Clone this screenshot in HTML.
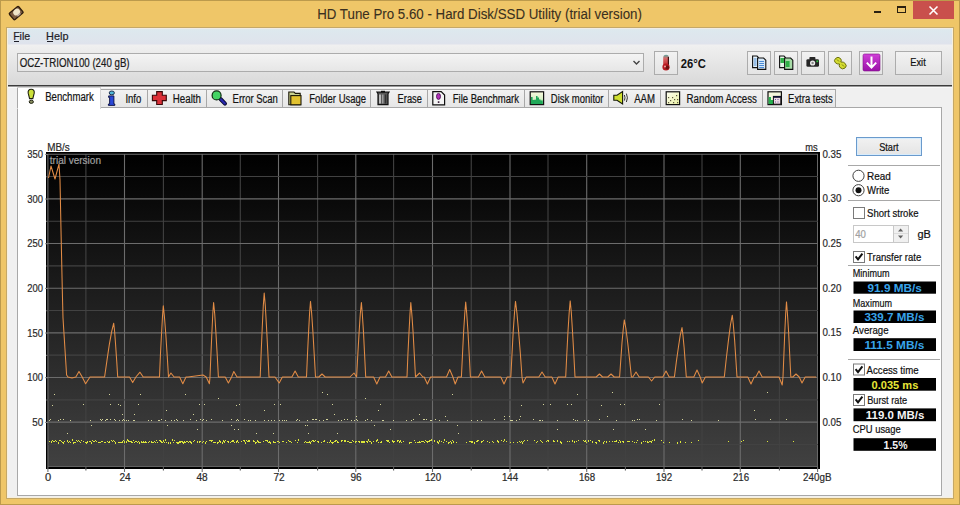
<!DOCTYPE html><html><head><meta charset="utf-8"><style>html,body{margin:0;padding:0;width:960px;height:505px;overflow:hidden;background:#efc668}svg text{font-family:"Liberation Sans",sans-serif;stroke:currentColor;stroke-width:0.22px}</style></head><body><svg width="960" height="505" viewBox="0 0 960 505" style="position:absolute;left:0;top:0;font-family:'Liberation Sans',sans-serif">
<defs>
<linearGradient id="chartbg" x1="0" y1="0" x2="0" y2="1">
 <stop offset="0" stop-color="#000"/><stop offset="1" stop-color="#414141"/>
</linearGradient>
<linearGradient id="toolbar" x1="0" y1="0" x2="0" y2="1">
 <stop offset="0" stop-color="#f0f0f0"/><stop offset="1" stop-color="#d9d9d9"/>
</linearGradient>
<linearGradient id="tab" x1="0" y1="0" x2="0" y2="1">
 <stop offset="0" stop-color="#f2f2f2"/><stop offset="1" stop-color="#e6e6e6"/>
</linearGradient>
<linearGradient id="btn" x1="0" y1="0" x2="0" y2="1">
 <stop offset="0" stop-color="#f2f2f2"/><stop offset="1" stop-color="#e4e4e4"/>
</linearGradient>
<linearGradient id="combo" x1="0" y1="0" x2="0" y2="1">
 <stop offset="0" stop-color="#f4f4f4"/><stop offset="1" stop-color="#e6e6e6"/>
</linearGradient>
</defs>
<rect x="0" y="0" width="960" height="505" fill="#efc668" />
<rect x="0.5" y="0.5" width="959" height="504" fill="none" stroke="#bc9a4c"/>
<g transform="translate(16.2,13.1) rotate(-40)"><rect x="-6" y="-4.2" width="12" height="8.4" rx="1" fill="#7a5a40" stroke="#2e1c0c" stroke-width="1.3"/><ellipse cx="1" cy="-0.5" rx="3.6" ry="3.1" fill="#efe4c8"/><rect x="-1" y="2.2" width="4" height="1.6" fill="#b8a8a0"/></g>
<text x="317.20" y="18.60" font-size="14" fill="#3a3020" color="#3a3020" textLength="324.70" lengthAdjust="spacingAndGlyphs" style="stroke-width:0.1px">HD Tune Pro 5.60 - Hard Disk/SSD Utility (trial version)</text>
<rect x="874" y="11" width="7" height="2" fill="#2a2010" />
<rect x="897.5" y="6.5" width="8" height="6" fill="none" stroke="#2a2010"/>
<rect x="897" y="6" width="9" height="2" fill="#2a2010" />
<rect x="913" y="1" width="41" height="18" fill="#c9504c" />
<path d="M929.5 6.5 L937.5 14.5 M937.5 6.5 L929.5 14.5" stroke="#fff" stroke-width="1.6"/>
<rect x="6.5" y="27.5" width="947" height="471" fill="#f8f0dc" stroke="#c4a868"/>
<rect x="8" y="29" width="944" height="468" fill="#f0f0f0" />
<defs><linearGradient id="menu" x1="0" y1="0" x2="0" y2="1"><stop offset="0" stop-color="#dde9ee"/><stop offset="1" stop-color="#dfe3ec"/></linearGradient></defs>
<rect x="8" y="28" width="944" height="1" fill="#f2ece4" />
<rect x="8" y="29" width="944" height="15" fill="url(#menu)"/>
<rect x="8" y="44" width="944" height="1" fill="#e8e9ee" />
<text x="13.15" y="40.40" font-size="11.5" fill="#1e1e28" color="#1e1e28" textLength="17.05" lengthAdjust="spacingAndGlyphs" >File</text>
<rect x="14" y="41" width="5" height="1" fill="#1e1e28" />
<text x="46.10" y="40.40" font-size="11.5" fill="#1e1e28" color="#1e1e28" textLength="22.40" lengthAdjust="spacingAndGlyphs" >Help</text>
<rect x="47" y="41" width="6" height="1" fill="#1e1e28" />
<rect x="8" y="45" width="944" height="40" fill="url(#toolbar)"/>
<rect x="8" y="85" width="944" height="1" fill="#3c3c3c" />
<rect x="8" y="86" width="944" height="1" fill="#9a9a9a" />
<rect x="8" y="87" width="944" height="1" fill="#fafafa" />
<rect x="17.5" y="53.5" width="626" height="18" fill="url(#combo)" stroke="#acacac"/>
<text x="19.65" y="66.60" font-size="12" fill="#1a1a1a" color="#1a1a1a" textLength="109.95" lengthAdjust="spacingAndGlyphs" >OCZ-TRION100 (240 gB)</text>
<path d="M633.5 61 L636.5 64 L639.5 61" fill="none" stroke="#444" stroke-width="1.4"/>
<rect x="654.5" y="51.5" width="23" height="23" fill="url(#btn)" stroke="#acacac"/>
<defs><linearGradient id="th" x1="0" y1="0" x2="0" y2="1"><stop offset="0" stop-color="#5aa8a0"/><stop offset="0.3" stop-color="#d86868"/><stop offset="1" stop-color="#c01c24"/></linearGradient></defs><rect x="663.2" y="54.8" width="5.8" height="12" rx="2.9" fill="url(#th)"/><path d="M668.4 57 V66" stroke="#401010" stroke-width="1.2"/><circle cx="666" cy="67" r="3.6" fill="#b81820"/><circle cx="667.2" cy="67.6" r="2" fill="#701010"/><circle cx="665" cy="66.6" r="1" fill="#f0a0a0"/>
<text x="680.80" y="68.00" font-size="12.5" fill="#111" color="#111" font-weight="700" style="stroke-width:0" textLength="25.10" lengthAdjust="spacingAndGlyphs" >26°C</text>
<rect x="747.5" y="51.5" width="23" height="23" fill="url(#btn)" stroke="#acacac"/>
<rect x="774.5" y="51.5" width="23" height="23" fill="url(#btn)" stroke="#acacac"/>
<rect x="801.5" y="51.5" width="23" height="23" fill="url(#btn)" stroke="#acacac"/>
<rect x="828.5" y="51.5" width="23" height="23" fill="url(#btn)" stroke="#acacac"/>
<rect x="859.5" y="51.5" width="23" height="23" fill="url(#btn)" stroke="#acacac"/>
<path d="M752.6 56 H757 L758.4 57.4 V67.6 H752.6 Z" fill="#e6f2fa" stroke="#101010" stroke-width="1.1"/>
<path d="M757.6 58 H763.6 L765.8 60.2 V69.4 H757.6 Z" fill="#d6e8f8" stroke="#101010" stroke-width="1.1"/>
<path d="M759.2 61.5 H764 M759.2 63.5 H764 M759.2 65.5 H764 M759.2 67.5 H764 M753.8 59 H756.6 M753.8 61 H756.6 M753.8 63 H756.6 M753.8 65 H756.6" stroke="#3a80d0" stroke-width="0.9"/>
<path d="M779.6 56 H784 L785.4 57.4 V67.6 H779.6 Z" fill="#e6f4e8" stroke="#101010" stroke-width="1.1"/><rect x="780.4" y="58" width="3.6" height="5" fill="#30b048"/>
<path d="M784.6 58 H790.6 L792.8 60.2 V69.4 H784.6 Z" fill="#a8dca8" stroke="#101010" stroke-width="1.1"/><path d="M785.6 61 h4 v6 h-4z" fill="#30b048"/>
<rect x="806.4" y="59.2" width="12.6" height="7.6" rx="1.4" fill="#262626"/><rect x="809.4" y="57" width="6" height="3" rx="0.8" fill="#262626"/><circle cx="812.6" cy="63" r="2.6" fill="#f0f0f0"/><circle cx="812.6" cy="63" r="1.2" fill="#888"/><rect x="816.4" y="60.4" width="1.8" height="1.8" fill="#30c040"/>
<path d="M835.5 58.5 Q838 56 840.5 58.5 Q842 60 840.8 62 Q843.5 61.5 845.2 63.5 Q847.5 66 845 68 Q842.5 70 840 67.5 Q838.5 66 839.6 64 Q837 64.5 835.2 62.5 Q833.5 60.5 835.5 58.5 Z" fill="#d4dc30" stroke="#6c7010" stroke-width="1"/>
<path d="M837 59.5 L839 61.5 M842 64.5 L844 66.5" stroke="#7a8010" stroke-width="1"/>
<defs><linearGradient id="pd" x1="0" y1="0" x2="0" y2="1"><stop offset="0" stop-color="#d040d8"/><stop offset="1" stop-color="#9a10a8"/></linearGradient></defs>
<rect x="863" y="54" width="17" height="17" rx="1.5" fill="url(#pd)" stroke="#801088" stroke-width="0.6"/><path d="M871.5 56.5 V67.2 M866.8 62.6 L871.5 67.6 L876.2 62.6" fill="none" stroke="#fff" stroke-width="2"/>
<rect x="895.5" y="51.5" width="46" height="23" fill="url(#btn)" stroke="#acacac"/>
<text x="910.30" y="66.20" font-size="11.5" fill="#111" color="#111" textLength="15.40" lengthAdjust="spacingAndGlyphs" >Exit</text>
<rect x="100.5" y="89.5" width="47" height="18" fill="url(#tab)" stroke="#a8a8a8"/>
<rect x="147.5" y="89.5" width="59" height="18" fill="url(#tab)" stroke="#a8a8a8"/>
<rect x="206.5" y="89.5" width="76" height="18" fill="url(#tab)" stroke="#a8a8a8"/>
<rect x="282.5" y="89.5" width="88" height="18" fill="url(#tab)" stroke="#a8a8a8"/>
<rect x="370.5" y="89.5" width="57" height="18" fill="url(#tab)" stroke="#a8a8a8"/>
<rect x="427.5" y="89.5" width="97" height="18" fill="url(#tab)" stroke="#a8a8a8"/>
<rect x="524.5" y="89.5" width="84" height="18" fill="url(#tab)" stroke="#a8a8a8"/>
<rect x="608.5" y="89.5" width="52" height="18" fill="url(#tab)" stroke="#a8a8a8"/>
<rect x="660.5" y="89.5" width="102" height="18" fill="url(#tab)" stroke="#a8a8a8"/>
<rect x="762.5" y="89.5" width="73" height="18" fill="url(#tab)" stroke="#a8a8a8"/>
<rect x="17.5" y="107.5" width="924" height="388" fill="#fff" stroke="#a8a8a8"/>
<rect x="17.5" y="87.5" width="83" height="21" fill="#fff" stroke="#d4d4d4"/>
<rect x="17" y="88" width="1" height="20" fill="#a8a8a8" />
<rect x="18" y="100" width="82" height="9" fill="#fff" />
<text x="45.20" y="100.90" font-size="12" fill="#141414" color="#141414" textLength="48.60" lengthAdjust="spacingAndGlyphs" >Benchmark</text>
<text x="125.40" y="102.70" font-size="12" fill="#141414" color="#141414" textLength="15.85" lengthAdjust="spacingAndGlyphs" >Info</text>
<text x="172.80" y="102.70" font-size="12" fill="#141414" color="#141414" textLength="28.20" lengthAdjust="spacingAndGlyphs" >Health</text>
<text x="232.60" y="102.70" font-size="12" fill="#141414" color="#141414" textLength="45.30" lengthAdjust="spacingAndGlyphs" >Error Scan</text>
<text x="309.20" y="102.70" font-size="12" fill="#141414" color="#141414" textLength="56.80" lengthAdjust="spacingAndGlyphs" >Folder Usage</text>
<text x="397.60" y="102.70" font-size="12" fill="#141414" color="#141414" textLength="24.30" lengthAdjust="spacingAndGlyphs" >Erase</text>
<text x="452.80" y="102.70" font-size="12" fill="#141414" color="#141414" textLength="66.10" lengthAdjust="spacingAndGlyphs" >File Benchmark</text>
<text x="550.80" y="102.70" font-size="12" fill="#141414" color="#141414" textLength="52.70" lengthAdjust="spacingAndGlyphs" >Disk monitor</text>
<text x="634.20" y="102.70" font-size="12" fill="#141414" color="#141414" textLength="20.80" lengthAdjust="spacingAndGlyphs" >AAM</text>
<text x="686.50" y="102.70" font-size="12" fill="#141414" color="#141414" textLength="70.50" lengthAdjust="spacingAndGlyphs" >Random Access</text>
<text x="788.10" y="102.70" font-size="12" fill="#141414" color="#141414" textLength="44.60" lengthAdjust="spacingAndGlyphs" >Extra tests</text>
<path d="M31.2 89.3 C33.6 89.3 34.6 91 34.2 93.2 L32.8 98.6 L29.6 98.6 L28.2 93.2 C27.8 91 28.8 89.3 31.2 89.3 Z" fill="#cce03a" stroke="#1e2010" stroke-width="1.1"/>
<ellipse cx="31.3" cy="101.8" rx="2.1" ry="1.6" fill="#8a9060" stroke="#1e2010" stroke-width="1"/>
<ellipse cx="111.8" cy="92.9" rx="2.6" ry="1.9" fill="#50b8d8" stroke="#102040" stroke-width="0.9"/>
<path d="M108.6 95.9 H113.9 V104 H114.8 V105.4 H108.4 V104 H109.6 V97.4 H108.6 Z" fill="#2a48d8" stroke="#0a1040" stroke-width="0.9"/>
<path d="M156.7 91.6 H162.3 V95.2 H166.3 V100.6 H162.3 V104.5 H156.7 V100.6 H152.4 V95.2 H156.7 Z" fill="#dc3038" stroke="#3a0808" stroke-width="1.1"/>
<path d="M220.5 99 L225 103.6" stroke="#0a0a30" stroke-width="4" stroke-linecap="round"/><path d="M220.5 99 L224.8 103.4" stroke="#2828b0" stroke-width="2.2" stroke-linecap="round"/>
<circle cx="216.6" cy="95.4" r="4.5" fill="#44d464" stroke="#0e2a10" stroke-width="1.2"/>
<path d="M288.8 92 H294 L295.4 93.4 H300.2 V104.8 H288.8 Z" fill="#c8d090" stroke="#1a1608" stroke-width="1.1"/>
<rect x="290.8" y="95.6" width="10.2" height="9.2" fill="#e2c230" stroke="#1a1608" stroke-width="1.1"/>
<path d="M377 92.2 H389 L388 93.8 V104.6 H378 V93.8 Z" fill="#585858" stroke="#101010" stroke-width="1.2"/>
<path d="M380 94.5 V103.5" stroke="#e8e8e8" stroke-width="1.4"/><path d="M382.8 94.5 V103.5" stroke="#b0b0b0" stroke-width="1.2"/><path d="M385.6 94.5 V103.5" stroke="#303030" stroke-width="1.2"/><rect x="381" y="90.8" width="4" height="1.6" fill="#101010"/>
<path d="M432.8 91.6 H441.2 L444.6 95 V104.8 H432.8 Z" fill="#f4f4f4" stroke="#101010" stroke-width="1.2"/>
<ellipse cx="438.5" cy="96.4" rx="2" ry="3" fill="#b030b8" stroke="#400848" stroke-width="0.8"/><rect x="437.8" y="101.3" width="1.6" height="1.6" fill="#301030"/>
<defs><linearGradient id="dm" x1="0" y1="0" x2="0" y2="1"><stop offset="0" stop-color="#fbfbe0"/><stop offset="0.55" stop-color="#d8f0c8"/><stop offset="1" stop-color="#30c060"/></linearGradient></defs>
<rect x="530.2" y="91.8" width="13.4" height="12.8" fill="url(#dm)" stroke="#101010" stroke-width="1.2"/>
<path d="M531 104 V97 H532.6 V100 H534.5 V99.8 H536 V96 H537.5 V97.5 H539 V99.5 H540.5 V100.5 H542.6 V104 Z" fill="#20a858"/>
<path d="M613.8 95.3 H617 L622.6 91.6 V104 L617 100.3 H613.8 Z" fill="#d0e030" stroke="#151808" stroke-width="1.1"/>
<path d="M624.4 95 Q625.6 97.8 624.4 100.6 M626.4 93.6 Q628.4 97.8 626.4 102" fill="none" stroke="#202020" stroke-width="0.9"/>
<defs><linearGradient id="ra" x1="0" y1="0" x2="1" y2="1"><stop offset="0" stop-color="#fffff4"/><stop offset="1" stop-color="#e8f0a0"/></linearGradient></defs>
<rect x="666.2" y="91.8" width="13.4" height="12.8" fill="url(#ra)" stroke="#101010" stroke-width="1.2"/>
<g fill="#605840"><rect x="668" y="97" width="1.2" height="1.2"/><rect x="672" y="97" width="1.2" height="1.2"/><rect x="670" y="100" width="1.2" height="1.2"/><rect x="674" y="99" width="1.2" height="1.2"/><rect x="676" y="95" width="1.2" height="1.2"/><rect x="677" y="99" width="1.2" height="1.2"/><rect x="673" y="102" width="1.2" height="1.2"/><rect x="668" y="102" width="1.2" height="1.2"/><rect x="677" y="102" width="1.2" height="1.2"/></g>
<rect x="768" y="91.8" width="13.4" height="12.8" fill="#f4f6dc" stroke="#101010" stroke-width="1.2"/>
<path d="M768.6 97 H771 V100 H773 V104 H768.6 Z" fill="#28b050"/>
<rect x="773.4" y="96.4" width="7.4" height="7.8" fill="#f0d8e4" stroke="#101010" stroke-width="1"/><rect x="773.4" y="96" width="7.4" height="1.8" fill="#101030"/>
<g fill="#6060a0"><rect x="775" y="99" width="1" height="1"/><rect x="777.5" y="99" width="1" height="1"/><rect x="775" y="101.5" width="1" height="1"/><rect x="777.5" y="101.5" width="1" height="1"/></g>
<rect x="46" y="152" width="774" height="317" fill="#000" />
<rect x="48" y="154" width="770" height="313" fill="url(#chartbg)"/>
<g><line x1="47.90" y1="154" x2="47.90" y2="467" stroke="#6c6c6c" stroke-width="1.1" /><line x1="85.90" y1="154" x2="85.90" y2="467" stroke="#424242" stroke-width="1.1" /><line x1="124.50" y1="154" x2="124.50" y2="467" stroke="#6c6c6c" stroke-width="1.1" /><line x1="163.40" y1="154" x2="163.40" y2="467" stroke="#424242" stroke-width="1.1" /><line x1="202.20" y1="154" x2="202.20" y2="467" stroke="#6c6c6c" stroke-width="1.1" /><line x1="240.30" y1="154" x2="240.30" y2="467" stroke="#424242" stroke-width="1.1" /><line x1="278.50" y1="154" x2="278.50" y2="467" stroke="#6c6c6c" stroke-width="1.1" /><line x1="317.60" y1="154" x2="317.60" y2="467" stroke="#424242" stroke-width="1.1" /><line x1="355.80" y1="154" x2="355.80" y2="467" stroke="#6c6c6c" stroke-width="1.1" /><line x1="393.60" y1="154" x2="393.60" y2="467" stroke="#424242" stroke-width="1.1" /><line x1="432.50" y1="154" x2="432.50" y2="467" stroke="#6c6c6c" stroke-width="1.1" /><line x1="471.25" y1="154" x2="471.25" y2="467" stroke="#424242" stroke-width="1.1" /><line x1="510.00" y1="154" x2="510.00" y2="467" stroke="#6c6c6c" stroke-width="1.1" /><line x1="548.00" y1="154" x2="548.00" y2="467" stroke="#424242" stroke-width="1.1" /><line x1="586.70" y1="154" x2="586.70" y2="467" stroke="#6c6c6c" stroke-width="1.1" /><line x1="625.40" y1="154" x2="625.40" y2="467" stroke="#424242" stroke-width="1.1" /><line x1="664.00" y1="154" x2="664.00" y2="467" stroke="#6c6c6c" stroke-width="1.1" /><line x1="702.00" y1="154" x2="702.00" y2="467" stroke="#424242" stroke-width="1.1" /><line x1="740.30" y1="154" x2="740.30" y2="467" stroke="#6c6c6c" stroke-width="1.1" /><line x1="779.40" y1="154" x2="779.40" y2="467" stroke="#424242" stroke-width="1.1" /><line x1="817.60" y1="154" x2="817.60" y2="467" stroke="#6c6c6c" stroke-width="1.1" /><line x1="48" y1="154.20" x2="818" y2="154.20" stroke="#6c6c6c" stroke-width="1.1"/><line x1="48" y1="176.53" x2="818" y2="176.53" stroke="#424242" stroke-width="1.1"/><line x1="48" y1="198.86" x2="818" y2="198.86" stroke="#6c6c6c" stroke-width="1.1"/><line x1="48" y1="221.19" x2="818" y2="221.19" stroke="#424242" stroke-width="1.1"/><line x1="48" y1="243.52" x2="818" y2="243.52" stroke="#6c6c6c" stroke-width="1.1"/><line x1="48" y1="265.85" x2="818" y2="265.85" stroke="#424242" stroke-width="1.1"/><line x1="48" y1="288.18" x2="818" y2="288.18" stroke="#6c6c6c" stroke-width="1.1"/><line x1="48" y1="310.51" x2="818" y2="310.51" stroke="#424242" stroke-width="1.1"/><line x1="48" y1="332.84" x2="818" y2="332.84" stroke="#6c6c6c" stroke-width="1.1"/><line x1="48" y1="355.17" x2="818" y2="355.17" stroke="#424242" stroke-width="1.1"/><line x1="48" y1="377.50" x2="818" y2="377.50" stroke="#6c6c6c" stroke-width="1.1"/><line x1="48" y1="399.83" x2="818" y2="399.83" stroke="#424242" stroke-width="1.1"/><line x1="48" y1="422.16" x2="818" y2="422.16" stroke="#6c6c6c" stroke-width="1.1"/><line x1="48" y1="444.49" x2="818" y2="444.49" stroke="#424242" stroke-width="1.1"/><line x1="48" y1="466.82" x2="818" y2="466.82" stroke="#6c6c6c" stroke-width="1.1"/></g>
<rect x="46" y="467" width="774" height="2" fill="#000" />
<rect x="818" y="152" width="2" height="317" fill="#000" />
<g fill="#dce63a" shape-rendering="crispEdges"><rect x="49" y="441" width="1" height="1"/><rect x="51" y="442" width="1" height="1"/><rect x="51" y="441" width="1" height="1"/><rect x="52" y="440" width="1" height="1"/><rect x="53" y="441" width="1" height="1"/><rect x="54" y="441" width="1" height="1"/><rect x="55" y="440" width="1" height="1"/><rect x="56" y="441" width="1" height="1"/><rect x="58" y="442" width="1" height="1"/><rect x="58" y="443" width="1" height="1"/><rect x="59" y="440" width="1" height="1"/><rect x="60" y="440" width="1" height="1"/><rect x="61" y="441" width="1" height="1"/><rect x="62" y="442" width="1" height="1"/><rect x="63" y="442" width="1" height="1"/><rect x="63" y="443" width="1" height="1"/><rect x="64" y="441" width="1" height="1"/><rect x="67" y="441" width="1" height="1"/><rect x="67" y="440" width="1" height="1"/><rect x="68" y="442" width="1" height="1"/><rect x="69" y="441" width="1" height="1"/><rect x="70" y="442" width="1" height="1"/><rect x="72" y="440" width="1" height="1"/><rect x="72" y="439" width="1" height="1"/><rect x="73" y="442" width="1" height="1"/><rect x="73" y="443" width="1" height="1"/><rect x="74" y="442" width="1" height="1"/><rect x="75" y="442" width="1" height="1"/><rect x="76" y="440" width="1" height="1"/><rect x="77" y="441" width="1" height="1"/><rect x="78" y="440" width="1" height="1"/><rect x="79" y="441" width="1" height="1"/><rect x="80" y="442" width="1" height="1"/><rect x="81" y="440" width="1" height="1"/><rect x="83" y="441" width="1" height="1"/><rect x="85" y="442" width="1" height="1"/><rect x="86" y="442" width="1" height="1"/><rect x="86" y="443" width="1" height="1"/><rect x="87" y="441" width="1" height="1"/><rect x="87" y="442" width="1" height="1"/><rect x="89" y="441" width="1" height="1"/><rect x="90" y="441" width="1" height="1"/><rect x="91" y="442" width="1" height="1"/><rect x="91" y="443" width="1" height="1"/><rect x="92" y="440" width="1" height="1"/><rect x="93" y="441" width="1" height="1"/><rect x="94" y="441" width="1" height="1"/><rect x="95" y="440" width="1" height="1"/><rect x="96" y="441" width="1" height="1"/><rect x="98" y="442" width="1" height="1"/><rect x="99" y="442" width="1" height="1"/><rect x="100" y="442" width="1" height="1"/><rect x="101" y="441" width="1" height="1"/><rect x="102" y="441" width="1" height="1"/><rect x="104" y="442" width="1" height="1"/><rect x="105" y="442" width="1" height="1"/><rect x="107" y="441" width="1" height="1"/><rect x="108" y="442" width="1" height="1"/><rect x="109" y="442" width="1" height="1"/><rect x="109" y="441" width="1" height="1"/><rect x="111" y="440" width="1" height="1"/><rect x="112" y="441" width="1" height="1"/><rect x="113" y="440" width="1" height="1"/><rect x="114" y="441" width="1" height="1"/><rect x="115" y="442" width="1" height="1"/><rect x="115" y="443" width="1" height="1"/><rect x="118" y="442" width="1" height="1"/><rect x="119" y="442" width="1" height="1"/><rect x="120" y="442" width="1" height="1"/><rect x="121" y="442" width="1" height="1"/><rect x="122" y="442" width="1" height="1"/><rect x="122" y="441" width="1" height="1"/><rect x="123" y="440" width="1" height="1"/><rect x="124" y="442" width="1" height="1"/><rect x="124" y="441" width="1" height="1"/><rect x="126" y="442" width="1" height="1"/><rect x="126" y="441" width="1" height="1"/><rect x="127" y="440" width="1" height="1"/><rect x="127" y="439" width="1" height="1"/><rect x="128" y="441" width="1" height="1"/><rect x="128" y="440" width="1" height="1"/><rect x="129" y="441" width="1" height="1"/><rect x="130" y="441" width="1" height="1"/><rect x="131" y="442" width="1" height="1"/><rect x="131" y="441" width="1" height="1"/><rect x="132" y="442" width="1" height="1"/><rect x="133" y="440" width="1" height="1"/><rect x="134" y="442" width="1" height="1"/><rect x="135" y="441" width="1" height="1"/><rect x="136" y="441" width="1" height="1"/><rect x="137" y="442" width="1" height="1"/><rect x="138" y="441" width="1" height="1"/><rect x="139" y="442" width="1" height="1"/><rect x="139" y="443" width="1" height="1"/><rect x="141" y="442" width="1" height="1"/><rect x="141" y="441" width="1" height="1"/><rect x="142" y="442" width="1" height="1"/><rect x="143" y="442" width="1" height="1"/><rect x="143" y="441" width="1" height="1"/><rect x="144" y="442" width="1" height="1"/><rect x="145" y="441" width="1" height="1"/><rect x="145" y="442" width="1" height="1"/><rect x="146" y="442" width="1" height="1"/><rect x="148" y="442" width="1" height="1"/><rect x="149" y="441" width="1" height="1"/><rect x="151" y="442" width="1" height="1"/><rect x="151" y="441" width="1" height="1"/><rect x="152" y="442" width="1" height="1"/><rect x="153" y="442" width="1" height="1"/><rect x="154" y="441" width="1" height="1"/><rect x="155" y="442" width="1" height="1"/><rect x="156" y="440" width="1" height="1"/><rect x="157" y="442" width="1" height="1"/><rect x="159" y="440" width="1" height="1"/><rect x="160" y="441" width="1" height="1"/><rect x="160" y="440" width="1" height="1"/><rect x="161" y="442" width="1" height="1"/><rect x="161" y="441" width="1" height="1"/><rect x="162" y="442" width="1" height="1"/><rect x="163" y="441" width="1" height="1"/><rect x="163" y="440" width="1" height="1"/><rect x="164" y="442" width="1" height="1"/><rect x="165" y="440" width="1" height="1"/><rect x="165" y="439" width="1" height="1"/><rect x="166" y="442" width="1" height="1"/><rect x="168" y="442" width="1" height="1"/><rect x="168" y="443" width="1" height="1"/><rect x="170" y="442" width="1" height="1"/><rect x="170" y="443" width="1" height="1"/><rect x="172" y="440" width="1" height="1"/><rect x="172" y="439" width="1" height="1"/><rect x="173" y="442" width="1" height="1"/><rect x="174" y="440" width="1" height="1"/><rect x="176" y="442" width="1" height="1"/><rect x="177" y="442" width="1" height="1"/><rect x="177" y="443" width="1" height="1"/><rect x="178" y="442" width="1" height="1"/><rect x="178" y="443" width="1" height="1"/><rect x="179" y="442" width="1" height="1"/><rect x="179" y="441" width="1" height="1"/><rect x="180" y="442" width="1" height="1"/><rect x="180" y="441" width="1" height="1"/><rect x="181" y="441" width="1" height="1"/><rect x="182" y="441" width="1" height="1"/><rect x="182" y="442" width="1" height="1"/><rect x="183" y="442" width="1" height="1"/><rect x="183" y="443" width="1" height="1"/><rect x="184" y="441" width="1" height="1"/><rect x="184" y="442" width="1" height="1"/><rect x="185" y="442" width="1" height="1"/><rect x="186" y="441" width="1" height="1"/><rect x="187" y="441" width="1" height="1"/><rect x="188" y="442" width="1" height="1"/><rect x="189" y="441" width="1" height="1"/><rect x="190" y="442" width="1" height="1"/><rect x="190" y="441" width="1" height="1"/><rect x="191" y="442" width="1" height="1"/><rect x="191" y="443" width="1" height="1"/><rect x="193" y="441" width="1" height="1"/><rect x="194" y="440" width="1" height="1"/><rect x="197" y="442" width="1" height="1"/><rect x="197" y="441" width="1" height="1"/><rect x="199" y="441" width="1" height="1"/><rect x="199" y="442" width="1" height="1"/><rect x="200" y="441" width="1" height="1"/><rect x="202" y="442" width="1" height="1"/><rect x="203" y="441" width="1" height="1"/><rect x="205" y="442" width="1" height="1"/><rect x="205" y="443" width="1" height="1"/><rect x="206" y="441" width="1" height="1"/><rect x="209" y="440" width="1" height="1"/><rect x="210" y="440" width="1" height="1"/><rect x="211" y="440" width="1" height="1"/><rect x="211" y="441" width="1" height="1"/><rect x="212" y="440" width="1" height="1"/><rect x="213" y="442" width="1" height="1"/><rect x="214" y="442" width="1" height="1"/><rect x="215" y="442" width="1" height="1"/><rect x="217" y="442" width="1" height="1"/><rect x="217" y="443" width="1" height="1"/><rect x="218" y="442" width="1" height="1"/><rect x="219" y="441" width="1" height="1"/><rect x="219" y="440" width="1" height="1"/><rect x="220" y="442" width="1" height="1"/><rect x="220" y="441" width="1" height="1"/><rect x="222" y="442" width="1" height="1"/><rect x="222" y="443" width="1" height="1"/><rect x="223" y="441" width="1" height="1"/><rect x="223" y="440" width="1" height="1"/><rect x="224" y="442" width="1" height="1"/><rect x="224" y="441" width="1" height="1"/><rect x="225" y="440" width="1" height="1"/><rect x="227" y="441" width="1" height="1"/><rect x="228" y="441" width="1" height="1"/><rect x="228" y="442" width="1" height="1"/><rect x="230" y="442" width="1" height="1"/><rect x="231" y="441" width="1" height="1"/><rect x="232" y="440" width="1" height="1"/><rect x="232" y="441" width="1" height="1"/><rect x="233" y="441" width="1" height="1"/><rect x="233" y="440" width="1" height="1"/><rect x="234" y="442" width="1" height="1"/><rect x="236" y="442" width="1" height="1"/><rect x="236" y="441" width="1" height="1"/><rect x="237" y="441" width="1" height="1"/><rect x="237" y="440" width="1" height="1"/><rect x="238" y="442" width="1" height="1"/><rect x="241" y="441" width="1" height="1"/><rect x="243" y="440" width="1" height="1"/><rect x="244" y="441" width="1" height="1"/><rect x="244" y="440" width="1" height="1"/><rect x="245" y="442" width="1" height="1"/><rect x="245" y="443" width="1" height="1"/><rect x="246" y="440" width="1" height="1"/><rect x="247" y="441" width="1" height="1"/><rect x="248" y="441" width="1" height="1"/><rect x="248" y="440" width="1" height="1"/><rect x="249" y="441" width="1" height="1"/><rect x="249" y="440" width="1" height="1"/><rect x="253" y="441" width="1" height="1"/><rect x="253" y="440" width="1" height="1"/><rect x="254" y="441" width="1" height="1"/><rect x="255" y="442" width="1" height="1"/><rect x="255" y="443" width="1" height="1"/><rect x="256" y="442" width="1" height="1"/><rect x="257" y="441" width="1" height="1"/><rect x="257" y="440" width="1" height="1"/><rect x="258" y="442" width="1" height="1"/><rect x="258" y="441" width="1" height="1"/><rect x="259" y="442" width="1" height="1"/><rect x="260" y="442" width="1" height="1"/><rect x="263" y="441" width="1" height="1"/><rect x="265" y="440" width="1" height="1"/><rect x="266" y="440" width="1" height="1"/><rect x="267" y="440" width="1" height="1"/><rect x="267" y="441" width="1" height="1"/><rect x="268" y="442" width="1" height="1"/><rect x="269" y="442" width="1" height="1"/><rect x="269" y="441" width="1" height="1"/><rect x="270" y="442" width="1" height="1"/><rect x="270" y="443" width="1" height="1"/><rect x="273" y="441" width="1" height="1"/><rect x="273" y="442" width="1" height="1"/><rect x="274" y="442" width="1" height="1"/><rect x="275" y="442" width="1" height="1"/><rect x="277" y="441" width="1" height="1"/><rect x="278" y="441" width="1" height="1"/><rect x="279" y="442" width="1" height="1"/><rect x="282" y="441" width="1" height="1"/><rect x="283" y="441" width="1" height="1"/><rect x="286" y="442" width="1" height="1"/><rect x="288" y="440" width="1" height="1"/><rect x="289" y="441" width="1" height="1"/><rect x="290" y="441" width="1" height="1"/><rect x="291" y="442" width="1" height="1"/><rect x="295" y="440" width="1" height="1"/><rect x="297" y="442" width="1" height="1"/><rect x="298" y="440" width="1" height="1"/><rect x="298" y="439" width="1" height="1"/><rect x="304" y="442" width="1" height="1"/><rect x="305" y="441" width="1" height="1"/><rect x="306" y="442" width="1" height="1"/><rect x="307" y="442" width="1" height="1"/><rect x="308" y="442" width="1" height="1"/><rect x="309" y="442" width="1" height="1"/><rect x="309" y="441" width="1" height="1"/><rect x="310" y="442" width="1" height="1"/><rect x="310" y="443" width="1" height="1"/><rect x="311" y="441" width="1" height="1"/><rect x="312" y="440" width="1" height="1"/><rect x="313" y="440" width="1" height="1"/><rect x="313" y="441" width="1" height="1"/><rect x="314" y="441" width="1" height="1"/><rect x="315" y="440" width="1" height="1"/><rect x="317" y="441" width="1" height="1"/><rect x="318" y="442" width="1" height="1"/><rect x="318" y="441" width="1" height="1"/><rect x="321" y="442" width="1" height="1"/><rect x="323" y="441" width="1" height="1"/><rect x="324" y="441" width="1" height="1"/><rect x="324" y="440" width="1" height="1"/><rect x="327" y="442" width="1" height="1"/><rect x="329" y="442" width="1" height="1"/><rect x="330" y="441" width="1" height="1"/><rect x="330" y="440" width="1" height="1"/><rect x="331" y="442" width="1" height="1"/><rect x="332" y="442" width="1" height="1"/><rect x="332" y="443" width="1" height="1"/><rect x="333" y="442" width="1" height="1"/><rect x="334" y="441" width="1" height="1"/><rect x="335" y="441" width="1" height="1"/><rect x="335" y="440" width="1" height="1"/><rect x="336" y="440" width="1" height="1"/><rect x="337" y="442" width="1" height="1"/><rect x="337" y="441" width="1" height="1"/><rect x="338" y="442" width="1" height="1"/><rect x="341" y="441" width="1" height="1"/><rect x="341" y="440" width="1" height="1"/><rect x="342" y="440" width="1" height="1"/><rect x="344" y="441" width="1" height="1"/><rect x="344" y="440" width="1" height="1"/><rect x="345" y="440" width="1" height="1"/><rect x="345" y="441" width="1" height="1"/><rect x="347" y="441" width="1" height="1"/><rect x="348" y="441" width="1" height="1"/><rect x="349" y="442" width="1" height="1"/><rect x="350" y="442" width="1" height="1"/><rect x="351" y="442" width="1" height="1"/><rect x="352" y="440" width="1" height="1"/><rect x="353" y="441" width="1" height="1"/><rect x="355" y="442" width="1" height="1"/><rect x="355" y="441" width="1" height="1"/><rect x="356" y="441" width="1" height="1"/><rect x="358" y="441" width="1" height="1"/><rect x="359" y="442" width="1" height="1"/><rect x="359" y="441" width="1" height="1"/><rect x="361" y="441" width="1" height="1"/><rect x="361" y="442" width="1" height="1"/><rect x="362" y="442" width="1" height="1"/><rect x="362" y="441" width="1" height="1"/><rect x="363" y="442" width="1" height="1"/><rect x="363" y="441" width="1" height="1"/><rect x="364" y="441" width="1" height="1"/><rect x="364" y="442" width="1" height="1"/><rect x="366" y="441" width="1" height="1"/><rect x="367" y="442" width="1" height="1"/><rect x="367" y="441" width="1" height="1"/><rect x="368" y="440" width="1" height="1"/><rect x="368" y="439" width="1" height="1"/><rect x="369" y="441" width="1" height="1"/><rect x="370" y="441" width="1" height="1"/><rect x="371" y="442" width="1" height="1"/><rect x="371" y="443" width="1" height="1"/><rect x="373" y="441" width="1" height="1"/><rect x="376" y="441" width="1" height="1"/><rect x="376" y="440" width="1" height="1"/><rect x="377" y="440" width="1" height="1"/><rect x="377" y="439" width="1" height="1"/><rect x="378" y="442" width="1" height="1"/><rect x="380" y="442" width="1" height="1"/><rect x="381" y="442" width="1" height="1"/><rect x="381" y="441" width="1" height="1"/><rect x="386" y="440" width="1" height="1"/><rect x="387" y="440" width="1" height="1"/><rect x="387" y="441" width="1" height="1"/><rect x="388" y="440" width="1" height="1"/><rect x="388" y="441" width="1" height="1"/><rect x="389" y="442" width="1" height="1"/><rect x="392" y="441" width="1" height="1"/><rect x="392" y="440" width="1" height="1"/><rect x="393" y="441" width="1" height="1"/><rect x="393" y="442" width="1" height="1"/><rect x="394" y="441" width="1" height="1"/><rect x="397" y="440" width="1" height="1"/><rect x="397" y="441" width="1" height="1"/><rect x="398" y="440" width="1" height="1"/><rect x="399" y="441" width="1" height="1"/><rect x="399" y="442" width="1" height="1"/><rect x="400" y="441" width="1" height="1"/><rect x="400" y="440" width="1" height="1"/><rect x="401" y="442" width="1" height="1"/><rect x="403" y="441" width="1" height="1"/><rect x="409" y="442" width="1" height="1"/><rect x="409" y="443" width="1" height="1"/><rect x="410" y="442" width="1" height="1"/><rect x="411" y="442" width="1" height="1"/><rect x="414" y="440" width="1" height="1"/><rect x="415" y="442" width="1" height="1"/><rect x="417" y="442" width="1" height="1"/><rect x="418" y="442" width="1" height="1"/><rect x="419" y="441" width="1" height="1"/><rect x="419" y="442" width="1" height="1"/><rect x="420" y="442" width="1" height="1"/><rect x="421" y="441" width="1" height="1"/><rect x="422" y="441" width="1" height="1"/><rect x="423" y="441" width="1" height="1"/><rect x="424" y="442" width="1" height="1"/><rect x="425" y="440" width="1" height="1"/><rect x="426" y="441" width="1" height="1"/><rect x="427" y="441" width="1" height="1"/><rect x="427" y="442" width="1" height="1"/><rect x="428" y="441" width="1" height="1"/><rect x="429" y="441" width="1" height="1"/><rect x="429" y="440" width="1" height="1"/><rect x="430" y="440" width="1" height="1"/><rect x="431" y="440" width="1" height="1"/><rect x="431" y="439" width="1" height="1"/><rect x="434" y="440" width="1" height="1"/><rect x="434" y="441" width="1" height="1"/><rect x="437" y="442" width="1" height="1"/><rect x="437" y="441" width="1" height="1"/><rect x="438" y="442" width="1" height="1"/><rect x="438" y="443" width="1" height="1"/><rect x="439" y="441" width="1" height="1"/><rect x="439" y="440" width="1" height="1"/><rect x="441" y="441" width="1" height="1"/><rect x="443" y="442" width="1" height="1"/><rect x="444" y="440" width="1" height="1"/><rect x="444" y="439" width="1" height="1"/><rect x="446" y="441" width="1" height="1"/><rect x="448" y="442" width="1" height="1"/><rect x="448" y="443" width="1" height="1"/><rect x="449" y="442" width="1" height="1"/><rect x="450" y="441" width="1" height="1"/><rect x="451" y="442" width="1" height="1"/><rect x="451" y="443" width="1" height="1"/><rect x="452" y="440" width="1" height="1"/><rect x="453" y="442" width="1" height="1"/><rect x="453" y="441" width="1" height="1"/><rect x="456" y="442" width="1" height="1"/><rect x="466" y="442" width="1" height="1"/><rect x="469" y="441" width="1" height="1"/><rect x="470" y="441" width="1" height="1"/><rect x="471" y="441" width="1" height="1"/><rect x="471" y="442" width="1" height="1"/><rect x="472" y="441" width="1" height="1"/><rect x="472" y="442" width="1" height="1"/><rect x="474" y="442" width="1" height="1"/><rect x="474" y="443" width="1" height="1"/><rect x="476" y="441" width="1" height="1"/><rect x="477" y="441" width="1" height="1"/><rect x="477" y="440" width="1" height="1"/><rect x="478" y="440" width="1" height="1"/><rect x="481" y="442" width="1" height="1"/><rect x="481" y="441" width="1" height="1"/><rect x="482" y="441" width="1" height="1"/><rect x="483" y="440" width="1" height="1"/><rect x="487" y="441" width="1" height="1"/><rect x="489" y="442" width="1" height="1"/><rect x="492" y="441" width="1" height="1"/><rect x="493" y="442" width="1" height="1"/><rect x="497" y="441" width="1" height="1"/><rect x="497" y="440" width="1" height="1"/><rect x="498" y="441" width="1" height="1"/><rect x="498" y="442" width="1" height="1"/><rect x="501" y="440" width="1" height="1"/><rect x="503" y="441" width="1" height="1"/><rect x="504" y="440" width="1" height="1"/><rect x="504" y="439" width="1" height="1"/><rect x="506" y="441" width="1" height="1"/><rect x="510" y="442" width="1" height="1"/><rect x="513" y="442" width="1" height="1"/><rect x="517" y="442" width="1" height="1"/><rect x="519" y="441" width="1" height="1"/><rect x="520" y="442" width="1" height="1"/><rect x="521" y="441" width="1" height="1"/><rect x="522" y="442" width="1" height="1"/><rect x="522" y="443" width="1" height="1"/><rect x="523" y="441" width="1" height="1"/><rect x="524" y="440" width="1" height="1"/><rect x="527" y="440" width="1" height="1"/><rect x="534" y="440" width="1" height="1"/><rect x="536" y="442" width="1" height="1"/><rect x="537" y="441" width="1" height="1"/><rect x="540" y="440" width="1" height="1"/><rect x="541" y="441" width="1" height="1"/><rect x="542" y="442" width="1" height="1"/><rect x="546" y="441" width="1" height="1"/><rect x="547" y="440" width="1" height="1"/><rect x="548" y="440" width="1" height="1"/><rect x="548" y="441" width="1" height="1"/><rect x="553" y="441" width="1" height="1"/><rect x="553" y="440" width="1" height="1"/><rect x="554" y="441" width="1" height="1"/><rect x="557" y="441" width="1" height="1"/><rect x="557" y="440" width="1" height="1"/><rect x="560" y="441" width="1" height="1"/><rect x="560" y="442" width="1" height="1"/><rect x="561" y="442" width="1" height="1"/><rect x="561" y="443" width="1" height="1"/><rect x="567" y="441" width="1" height="1"/><rect x="569" y="441" width="1" height="1"/><rect x="572" y="440" width="1" height="1"/><rect x="572" y="441" width="1" height="1"/><rect x="574" y="442" width="1" height="1"/><rect x="574" y="441" width="1" height="1"/><rect x="576" y="441" width="1" height="1"/><rect x="578" y="440" width="1" height="1"/><rect x="583" y="440" width="1" height="1"/><rect x="584" y="441" width="1" height="1"/><rect x="585" y="440" width="1" height="1"/><rect x="585" y="441" width="1" height="1"/><rect x="586" y="442" width="1" height="1"/><rect x="588" y="440" width="1" height="1"/><rect x="588" y="441" width="1" height="1"/><rect x="590" y="440" width="1" height="1"/><rect x="592" y="441" width="1" height="1"/><rect x="592" y="442" width="1" height="1"/><rect x="595" y="442" width="1" height="1"/><rect x="596" y="442" width="1" height="1"/><rect x="596" y="443" width="1" height="1"/><rect x="598" y="440" width="1" height="1"/><rect x="599" y="440" width="1" height="1"/><rect x="599" y="441" width="1" height="1"/><rect x="603" y="442" width="1" height="1"/><rect x="603" y="443" width="1" height="1"/><rect x="604" y="441" width="1" height="1"/><rect x="606" y="441" width="1" height="1"/><rect x="606" y="442" width="1" height="1"/><rect x="609" y="441" width="1" height="1"/><rect x="612" y="441" width="1" height="1"/><rect x="614" y="441" width="1" height="1"/><rect x="615" y="441" width="1" height="1"/><rect x="616" y="440" width="1" height="1"/><rect x="616" y="441" width="1" height="1"/><rect x="618" y="442" width="1" height="1"/><rect x="619" y="440" width="1" height="1"/><rect x="620" y="442" width="1" height="1"/><rect x="620" y="441" width="1" height="1"/><rect x="622" y="441" width="1" height="1"/><rect x="623" y="441" width="1" height="1"/><rect x="623" y="442" width="1" height="1"/><rect x="627" y="441" width="1" height="1"/><rect x="628" y="441" width="1" height="1"/><rect x="629" y="441" width="1" height="1"/><rect x="632" y="441" width="1" height="1"/><rect x="634" y="442" width="1" height="1"/><rect x="636" y="442" width="1" height="1"/><rect x="637" y="440" width="1" height="1"/><rect x="641" y="442" width="1" height="1"/><rect x="641" y="443" width="1" height="1"/><rect x="643" y="441" width="1" height="1"/><rect x="645" y="441" width="1" height="1"/><rect x="647" y="442" width="1" height="1"/><rect x="647" y="441" width="1" height="1"/><rect x="648" y="442" width="1" height="1"/><rect x="649" y="441" width="1" height="1"/><rect x="650" y="441" width="1" height="1"/><rect x="651" y="441" width="1" height="1"/><rect x="651" y="442" width="1" height="1"/><rect x="652" y="440" width="1" height="1"/><rect x="654" y="440" width="1" height="1"/><rect x="654" y="439" width="1" height="1"/><rect x="661" y="440" width="1" height="1"/><rect x="663" y="442" width="1" height="1"/><rect x="669" y="442" width="1" height="1"/><rect x="677" y="442" width="1" height="1"/><rect x="677" y="443" width="1" height="1"/><rect x="680" y="441" width="1" height="1"/><rect x="680" y="442" width="1" height="1"/><rect x="685" y="442" width="1" height="1"/><rect x="691" y="442" width="1" height="1"/><rect x="698" y="440" width="1" height="1"/><rect x="728" y="441" width="1" height="1"/><rect x="741" y="441" width="1" height="1"/><rect x="743" y="440" width="1" height="1"/><rect x="767" y="441" width="1" height="1"/><rect x="793" y="441" width="1" height="1"/></g>
<g fill="#d4d49a" shape-rendering="crispEdges"><rect x="49" y="420" width="1" height="1"/><rect x="50" y="419" width="1" height="1"/><rect x="52" y="405" width="1" height="1"/><rect x="54" y="394" width="1" height="1"/><rect x="58" y="420" width="1" height="1"/><rect x="60" y="419" width="1" height="1"/><rect x="63" y="419" width="1" height="1"/><rect x="67" y="433" width="1" height="1"/><rect x="70" y="420" width="1" height="1"/><rect x="83" y="404" width="1" height="1"/><rect x="90" y="420" width="1" height="1"/><rect x="91" y="425" width="1" height="1"/><rect x="100" y="419" width="1" height="1"/><rect x="101" y="420" width="1" height="1"/><rect x="102" y="419" width="1" height="1"/><rect x="105" y="420" width="1" height="1"/><rect x="106" y="419" width="1" height="1"/><rect x="107" y="419" width="1" height="1"/><rect x="109" y="394" width="1" height="1"/><rect x="110" y="419" width="1" height="1"/><rect x="110" y="404" width="1" height="1"/><rect x="114" y="419" width="1" height="1"/><rect x="115" y="420" width="1" height="1"/><rect x="118" y="404" width="1" height="1"/><rect x="119" y="420" width="1" height="1"/><rect x="120" y="405" width="1" height="1"/><rect x="122" y="420" width="1" height="1"/><rect x="122" y="414" width="1" height="1"/><rect x="123" y="419" width="1" height="1"/><rect x="124" y="420" width="1" height="1"/><rect x="126" y="420" width="1" height="1"/><rect x="128" y="420" width="1" height="1"/><rect x="133" y="420" width="1" height="1"/><rect x="134" y="420" width="1" height="1"/><rect x="134" y="414" width="1" height="1"/><rect x="138" y="404" width="1" height="1"/><rect x="140" y="394" width="1" height="1"/><rect x="148" y="420" width="1" height="1"/><rect x="151" y="420" width="1" height="1"/><rect x="158" y="420" width="1" height="1"/><rect x="159" y="420" width="1" height="1"/><rect x="161" y="419" width="1" height="1"/><rect x="165" y="420" width="1" height="1"/><rect x="166" y="410" width="1" height="1"/><rect x="167" y="425" width="1" height="1"/><rect x="171" y="420" width="1" height="1"/><rect x="174" y="420" width="1" height="1"/><rect x="176" y="419" width="1" height="1"/><rect x="177" y="420" width="1" height="1"/><rect x="183" y="420" width="1" height="1"/><rect x="185" y="394" width="1" height="1"/><rect x="190" y="419" width="1" height="1"/><rect x="193" y="414" width="1" height="1"/><rect x="196" y="420" width="1" height="1"/><rect x="197" y="429" width="1" height="1"/><rect x="199" y="404" width="1" height="1"/><rect x="200" y="419" width="1" height="1"/><rect x="202" y="420" width="1" height="1"/><rect x="203" y="419" width="1" height="1"/><rect x="204" y="404" width="1" height="1"/><rect x="206" y="420" width="1" height="1"/><rect x="211" y="419" width="1" height="1"/><rect x="218" y="398" width="1" height="1"/><rect x="222" y="420" width="1" height="1"/><rect x="231" y="419" width="1" height="1"/><rect x="231" y="425" width="1" height="1"/><rect x="234" y="429" width="1" height="1"/><rect x="236" y="420" width="1" height="1"/><rect x="236" y="405" width="1" height="1"/><rect x="237" y="419" width="1" height="1"/><rect x="238" y="420" width="1" height="1"/><rect x="238" y="429" width="1" height="1"/><rect x="239" y="404" width="1" height="1"/><rect x="244" y="419" width="1" height="1"/><rect x="248" y="420" width="1" height="1"/><rect x="250" y="420" width="1" height="1"/><rect x="255" y="420" width="1" height="1"/><rect x="256" y="433" width="1" height="1"/><rect x="264" y="420" width="1" height="1"/><rect x="264" y="410" width="1" height="1"/><rect x="268" y="420" width="1" height="1"/><rect x="271" y="420" width="1" height="1"/><rect x="273" y="433" width="1" height="1"/><rect x="274" y="420" width="1" height="1"/><rect x="274" y="404" width="1" height="1"/><rect x="279" y="420" width="1" height="1"/><rect x="280" y="404" width="1" height="1"/><rect x="282" y="420" width="1" height="1"/><rect x="284" y="420" width="1" height="1"/><rect x="286" y="420" width="1" height="1"/><rect x="296" y="420" width="1" height="1"/><rect x="297" y="419" width="1" height="1"/><rect x="299" y="420" width="1" height="1"/><rect x="305" y="425" width="1" height="1"/><rect x="307" y="420" width="1" height="1"/><rect x="307" y="425" width="1" height="1"/><rect x="308" y="433" width="1" height="1"/><rect x="312" y="419" width="1" height="1"/><rect x="313" y="419" width="1" height="1"/><rect x="315" y="419" width="1" height="1"/><rect x="316" y="419" width="1" height="1"/><rect x="319" y="420" width="1" height="1"/><rect x="322" y="392" width="1" height="1"/><rect x="323" y="420" width="1" height="1"/><rect x="326" y="419" width="1" height="1"/><rect x="327" y="419" width="1" height="1"/><rect x="327" y="394" width="1" height="1"/><rect x="332" y="404" width="1" height="1"/><rect x="334" y="414" width="1" height="1"/><rect x="337" y="433" width="1" height="1"/><rect x="338" y="420" width="1" height="1"/><rect x="341" y="420" width="1" height="1"/><rect x="344" y="419" width="1" height="1"/><rect x="347" y="419" width="1" height="1"/><rect x="351" y="420" width="1" height="1"/><rect x="354" y="420" width="1" height="1"/><rect x="356" y="419" width="1" height="1"/><rect x="356" y="416" width="1" height="1"/><rect x="357" y="420" width="1" height="1"/><rect x="365" y="420" width="1" height="1"/><rect x="365" y="398" width="1" height="1"/><rect x="367" y="419" width="1" height="1"/><rect x="371" y="420" width="1" height="1"/><rect x="374" y="425" width="1" height="1"/><rect x="378" y="410" width="1" height="1"/><rect x="380" y="404" width="1" height="1"/><rect x="382" y="420" width="1" height="1"/><rect x="383" y="420" width="1" height="1"/><rect x="390" y="429" width="1" height="1"/><rect x="393" y="420" width="1" height="1"/><rect x="406" y="420" width="1" height="1"/><rect x="411" y="420" width="1" height="1"/><rect x="413" y="419" width="1" height="1"/><rect x="419" y="414" width="1" height="1"/><rect x="423" y="419" width="1" height="1"/><rect x="424" y="419" width="1" height="1"/><rect x="426" y="419" width="1" height="1"/><rect x="430" y="420" width="1" height="1"/><rect x="431" y="420" width="1" height="1"/><rect x="435" y="419" width="1" height="1"/><rect x="439" y="420" width="1" height="1"/><rect x="445" y="416" width="1" height="1"/><rect x="447" y="420" width="1" height="1"/><rect x="452" y="394" width="1" height="1"/><rect x="457" y="425" width="1" height="1"/><rect x="458" y="433" width="1" height="1"/><rect x="471" y="420" width="1" height="1"/><rect x="477" y="420" width="1" height="1"/><rect x="481" y="420" width="1" height="1"/><rect x="494" y="419" width="1" height="1"/><rect x="504" y="419" width="1" height="1"/><rect x="504" y="416" width="1" height="1"/><rect x="509" y="416" width="1" height="1"/><rect x="510" y="420" width="1" height="1"/><rect x="511" y="420" width="1" height="1"/><rect x="512" y="420" width="1" height="1"/><rect x="516" y="420" width="1" height="1"/><rect x="519" y="419" width="1" height="1"/><rect x="520" y="416" width="1" height="1"/><rect x="521" y="405" width="1" height="1"/><rect x="533" y="419" width="1" height="1"/><rect x="539" y="420" width="1" height="1"/><rect x="540" y="420" width="1" height="1"/><rect x="542" y="420" width="1" height="1"/><rect x="543" y="404" width="1" height="1"/><rect x="550" y="404" width="1" height="1"/><rect x="557" y="420" width="1" height="1"/><rect x="557" y="429" width="1" height="1"/><rect x="567" y="404" width="1" height="1"/><rect x="571" y="404" width="1" height="1"/><rect x="573" y="419" width="1" height="1"/><rect x="575" y="420" width="1" height="1"/><rect x="577" y="420" width="1" height="1"/><rect x="577" y="394" width="1" height="1"/><rect x="584" y="420" width="1" height="1"/><rect x="588" y="420" width="1" height="1"/><rect x="599" y="419" width="1" height="1"/><rect x="601" y="405" width="1" height="1"/><rect x="607" y="416" width="1" height="1"/><rect x="612" y="392" width="1" height="1"/><rect x="613" y="429" width="1" height="1"/><rect x="616" y="420" width="1" height="1"/><rect x="620" y="404" width="1" height="1"/><rect x="624" y="404" width="1" height="1"/><rect x="632" y="420" width="1" height="1"/><rect x="634" y="420" width="1" height="1"/><rect x="637" y="419" width="1" height="1"/><rect x="639" y="419" width="1" height="1"/><rect x="645" y="429" width="1" height="1"/><rect x="656" y="420" width="1" height="1"/><rect x="659" y="404" width="1" height="1"/><rect x="682" y="419" width="1" height="1"/><rect x="691" y="420" width="1" height="1"/><rect x="718" y="420" width="1" height="1"/><rect x="754" y="410" width="1" height="1"/><rect x="755" y="419" width="1" height="1"/><rect x="767" y="392" width="1" height="1"/><rect x="770" y="419" width="1" height="1"/><rect x="786" y="419" width="1" height="1"/></g>
<polyline fill="none" stroke="#e28c46" stroke-width="1.05" stroke-linejoin="round" points="48.5,178.0 51.0,166.0 55.0,179.0 59.0,164.0 60.0,180.0 61.0,230.0 62.3,290.0 63.0,318.0 66.6,375.0 68.0,377.0 72.0,378.0 75.8,377.0 79.0,371.4 82.2,377.0 85.6,383.8 90.0,377.0 104.6,377.0 106.9,360.9 109.3,344.7 111.7,331.3 113.7,323.2 114.6,331.3 115.6,344.7 116.7,360.9 117.7,377.0 125.0,377.0 129.5,377.0 132.7,382.6 135.9,377.0 140.0,372.2 143.2,377.0 147.0,377.0 159.5,377.0 160.4,355.6 161.5,334.2 162.5,316.4 163.3,305.7 164.4,316.4 165.8,334.2 167.2,355.6 168.5,377.0 170.9,373.0 174.1,377.0 176.0,377.0 179.6,377.0 182.8,383.8 186.0,377.0 188.0,377.0 203.0,375.0 206.2,377.0 209.4,383.8 210.0,377.0 210.9,354.7 211.9,332.4 212.8,313.8 213.6,302.6 214.7,313.8 215.9,332.4 217.2,354.7 218.4,377.0 225.2,377.0 228.4,383.0 231.6,377.0 233.8,371.5 237.0,377.0 240.0,377.0 255.0,377.0 257.0,377.0 260.2,377.0 261.2,351.8 262.3,326.6 263.3,305.6 264.2,293.0 265.3,305.6 266.5,326.6 267.8,351.8 269.0,377.0 275.0,377.0 279.2,383.0 282.4,377.0 285.0,377.0 291.9,377.0 295.1,371.0 298.3,377.0 302.0,377.0 306.5,377.0 307.5,354.3 308.6,331.6 309.6,312.7 310.5,301.4 311.6,312.7 312.9,331.6 314.2,354.3 315.5,377.0 318.8,377.0 322.0,374.0 325.2,377.0 330.0,377.0 350.0,377.0 354.0,373.0 356.6,377.0 357.8,354.7 359.1,332.4 360.3,313.8 361.4,302.6 362.3,313.8 363.5,332.4 364.6,354.7 365.7,377.0 370.0,377.0 373.6,377.0 376.8,384.0 380.0,377.0 382.0,377.0 385.5,377.0 388.7,371.0 391.9,377.0 395.0,377.0 407.0,377.0 407.9,354.7 409.0,332.4 410.0,313.8 410.8,302.6 411.8,313.8 413.1,332.4 414.3,354.7 415.5,377.0 419.6,373.0 422.8,377.0 424.2,377.0 427.4,384.0 430.6,377.0 433.0,377.0 446.5,377.0 449.7,369.5 452.9,377.0 455.2,384.0 458.0,377.0 461.4,377.0 462.5,354.5 463.6,332.0 464.8,313.2 465.7,302.0 466.7,313.2 468.0,332.0 469.2,354.5 470.4,377.0 478.4,377.0 481.6,371.0 484.8,377.0 490.0,377.0 500.8,377.0 504.0,384.0 507.2,377.0 510.8,377.0 512.0,354.3 513.2,331.6 514.5,312.7 515.5,301.4 516.9,312.7 518.6,331.6 520.4,354.3 522.0,377.0 523.0,383.0 526.2,377.0 530.0,377.0 538.8,377.0 542.0,372.0 545.2,377.0 551.8,377.0 555.0,384.0 558.2,377.0 560.0,377.0 565.7,377.0 566.8,354.2 568.0,331.3 569.2,312.3 570.2,300.9 571.3,312.3 572.5,331.3 573.8,354.2 575.0,377.0 590.0,377.0 596.2,377.0 599.4,374.0 602.6,377.0 605.0,377.0 607.8,377.0 611.0,374.0 614.2,377.0 619.6,377.0 620.8,359.9 622.0,342.7 623.3,328.5 624.3,319.9 625.9,328.5 627.7,342.7 629.6,359.9 631.4,377.0 632.8,377.0 636.0,372.0 639.2,377.0 645.0,377.0 648.4,377.0 651.6,381.0 654.8,377.0 658.0,377.0 662.8,377.0 666.0,371.0 669.2,377.0 674.4,377.0 676.3,362.1 678.4,347.3 680.3,334.9 682.0,327.5 682.9,334.9 684.1,347.3 685.2,362.1 686.3,377.0 693.8,377.0 697.0,370.0 700.2,377.0 702.2,383.0 705.4,377.0 708.0,377.0 724.3,377.0 726.3,358.5 728.5,339.9 730.5,324.5 732.3,315.2 733.3,324.5 734.6,339.9 735.8,358.5 737.0,377.0 747.8,377.0 751.0,384.0 754.2,377.0 755.8,377.0 759.0,371.0 762.2,377.0 770.0,377.0 779.0,377.0 782.2,385.0 783.0,377.0 783.9,354.5 784.8,331.9 785.7,313.2 786.5,301.9 787.4,313.2 788.6,331.9 789.7,354.5 790.8,377.0 792.8,377.0 796.0,374.0 799.2,377.0 802.0,383.0 805.2,377.0 808.0,377.0 816.2,377.0"/>
<text x="49.80" y="163.75" font-size="11.5" fill="#a0a0a0" color="#a0a0a0" textLength="51.20" lengthAdjust="spacingAndGlyphs" >trial version</text>
<text x="47.30" y="150.70" font-size="11.5" fill="#2a2a2a" color="#2a2a2a" textLength="22.50" lengthAdjust="spacingAndGlyphs" >MB/s</text>
<text x="805.20" y="150.70" font-size="11.5" fill="#2a2a2a" color="#2a2a2a" textLength="12.40" lengthAdjust="spacingAndGlyphs" >ms</text>
<line x1="46" y1="176.73" x2="48" y2="176.73" stroke="#5a5a5a" stroke-width="1.1"/>
<text x="27.35" y="157.90" font-size="11.5" fill="#2a2a2a" color="#2a2a2a" textLength="15.75" lengthAdjust="spacingAndGlyphs" >350</text>
<text x="822.40" y="157.80" font-size="11.5" fill="#2a2a2a" color="#2a2a2a" textLength="19.00" lengthAdjust="spacingAndGlyphs" >0.35</text>
<line x1="45" y1="154.40" x2="48" y2="154.40" stroke="#8a8a8a" stroke-width="1"/>
<line x1="46" y1="221.39" x2="48" y2="221.39" stroke="#5a5a5a" stroke-width="1.1"/>
<text x="27.35" y="202.56" font-size="11.5" fill="#2a2a2a" color="#2a2a2a" textLength="15.75" lengthAdjust="spacingAndGlyphs" >300</text>
<text x="822.40" y="202.46" font-size="11.5" fill="#2a2a2a" color="#2a2a2a" textLength="19.00" lengthAdjust="spacingAndGlyphs" >0.30</text>
<line x1="45" y1="199.06" x2="48" y2="199.06" stroke="#8a8a8a" stroke-width="1"/>
<line x1="46" y1="266.05" x2="48" y2="266.05" stroke="#5a5a5a" stroke-width="1.1"/>
<text x="27.35" y="247.22" font-size="11.5" fill="#2a2a2a" color="#2a2a2a" textLength="15.75" lengthAdjust="spacingAndGlyphs" >250</text>
<text x="822.40" y="247.12" font-size="11.5" fill="#2a2a2a" color="#2a2a2a" textLength="19.00" lengthAdjust="spacingAndGlyphs" >0.25</text>
<line x1="45" y1="243.72" x2="48" y2="243.72" stroke="#8a8a8a" stroke-width="1"/>
<line x1="46" y1="310.71" x2="48" y2="310.71" stroke="#5a5a5a" stroke-width="1.1"/>
<text x="27.35" y="291.88" font-size="11.5" fill="#2a2a2a" color="#2a2a2a" textLength="15.75" lengthAdjust="spacingAndGlyphs" >200</text>
<text x="822.40" y="291.78" font-size="11.5" fill="#2a2a2a" color="#2a2a2a" textLength="19.00" lengthAdjust="spacingAndGlyphs" >0.20</text>
<line x1="45" y1="288.38" x2="48" y2="288.38" stroke="#8a8a8a" stroke-width="1"/>
<line x1="46" y1="355.37" x2="48" y2="355.37" stroke="#5a5a5a" stroke-width="1.1"/>
<text x="27.35" y="336.54" font-size="11.5" fill="#2a2a2a" color="#2a2a2a" textLength="15.75" lengthAdjust="spacingAndGlyphs" >150</text>
<text x="822.40" y="336.44" font-size="11.5" fill="#2a2a2a" color="#2a2a2a" textLength="19.00" lengthAdjust="spacingAndGlyphs" >0.15</text>
<line x1="45" y1="333.04" x2="48" y2="333.04" stroke="#8a8a8a" stroke-width="1"/>
<line x1="46" y1="400.03" x2="48" y2="400.03" stroke="#5a5a5a" stroke-width="1.1"/>
<text x="27.35" y="381.20" font-size="11.5" fill="#2a2a2a" color="#2a2a2a" textLength="15.75" lengthAdjust="spacingAndGlyphs" >100</text>
<text x="822.40" y="381.10" font-size="11.5" fill="#2a2a2a" color="#2a2a2a" textLength="19.00" lengthAdjust="spacingAndGlyphs" >0.10</text>
<line x1="45" y1="377.70" x2="48" y2="377.70" stroke="#8a8a8a" stroke-width="1"/>
<text x="32.20" y="425.86" font-size="11.5" fill="#2a2a2a" color="#2a2a2a" textLength="10.90" lengthAdjust="spacingAndGlyphs" >50</text>
<text x="822.40" y="425.76" font-size="11.5" fill="#2a2a2a" color="#2a2a2a" textLength="19.00" lengthAdjust="spacingAndGlyphs" >0.05</text>
<line x1="45" y1="422.36" x2="48" y2="422.36" stroke="#8a8a8a" stroke-width="1"/>
<text x="44.90" y="480.60" font-size="11.5" fill="#2a2a2a" color="#2a2a2a" textLength="6.20" lengthAdjust="spacingAndGlyphs" >0</text>
<text x="119.40" y="480.60" font-size="11.5" fill="#2a2a2a" color="#2a2a2a" textLength="11.20" lengthAdjust="spacingAndGlyphs" >24</text>
<text x="196.40" y="480.60" font-size="11.5" fill="#2a2a2a" color="#2a2a2a" textLength="11.20" lengthAdjust="spacingAndGlyphs" >48</text>
<text x="273.40" y="480.60" font-size="11.5" fill="#2a2a2a" color="#2a2a2a" textLength="11.20" lengthAdjust="spacingAndGlyphs" >72</text>
<text x="350.40" y="480.60" font-size="11.5" fill="#2a2a2a" color="#2a2a2a" textLength="11.20" lengthAdjust="spacingAndGlyphs" >96</text>
<text x="424.90" y="480.60" font-size="11.5" fill="#2a2a2a" color="#2a2a2a" textLength="16.20" lengthAdjust="spacingAndGlyphs" >120</text>
<text x="501.90" y="480.60" font-size="11.5" fill="#2a2a2a" color="#2a2a2a" textLength="16.20" lengthAdjust="spacingAndGlyphs" >144</text>
<text x="578.90" y="480.60" font-size="11.5" fill="#2a2a2a" color="#2a2a2a" textLength="16.20" lengthAdjust="spacingAndGlyphs" >168</text>
<text x="655.90" y="480.60" font-size="11.5" fill="#2a2a2a" color="#2a2a2a" textLength="16.20" lengthAdjust="spacingAndGlyphs" >192</text>
<text x="732.90" y="480.60" font-size="11.5" fill="#2a2a2a" color="#2a2a2a" textLength="16.20" lengthAdjust="spacingAndGlyphs" >216</text>
<text x="803.10" y="480.60" font-size="11.5" fill="#2a2a2a" color="#2a2a2a" textLength="28.40" lengthAdjust="spacingAndGlyphs" >240gB</text>
<line x1="47.90" y1="467" x2="47.90" y2="472" stroke="#707070" stroke-width="1.1"/>
<line x1="85.90" y1="467" x2="85.90" y2="470.5" stroke="#5a5a5a" stroke-width="1.1"/>
<line x1="124.50" y1="467" x2="124.50" y2="472" stroke="#707070" stroke-width="1.1"/>
<line x1="163.40" y1="467" x2="163.40" y2="470.5" stroke="#5a5a5a" stroke-width="1.1"/>
<line x1="202.20" y1="467" x2="202.20" y2="472" stroke="#707070" stroke-width="1.1"/>
<line x1="240.30" y1="467" x2="240.30" y2="470.5" stroke="#5a5a5a" stroke-width="1.1"/>
<line x1="278.50" y1="467" x2="278.50" y2="472" stroke="#707070" stroke-width="1.1"/>
<line x1="317.60" y1="467" x2="317.60" y2="470.5" stroke="#5a5a5a" stroke-width="1.1"/>
<line x1="355.80" y1="467" x2="355.80" y2="472" stroke="#707070" stroke-width="1.1"/>
<line x1="393.60" y1="467" x2="393.60" y2="470.5" stroke="#5a5a5a" stroke-width="1.1"/>
<line x1="432.50" y1="467" x2="432.50" y2="472" stroke="#707070" stroke-width="1.1"/>
<line x1="471.25" y1="467" x2="471.25" y2="470.5" stroke="#5a5a5a" stroke-width="1.1"/>
<line x1="510.00" y1="467" x2="510.00" y2="472" stroke="#707070" stroke-width="1.1"/>
<line x1="548.00" y1="467" x2="548.00" y2="470.5" stroke="#5a5a5a" stroke-width="1.1"/>
<line x1="586.70" y1="467" x2="586.70" y2="472" stroke="#707070" stroke-width="1.1"/>
<line x1="625.40" y1="467" x2="625.40" y2="470.5" stroke="#5a5a5a" stroke-width="1.1"/>
<line x1="664.00" y1="467" x2="664.00" y2="472" stroke="#707070" stroke-width="1.1"/>
<line x1="702.00" y1="467" x2="702.00" y2="470.5" stroke="#5a5a5a" stroke-width="1.1"/>
<line x1="740.30" y1="467" x2="740.30" y2="472" stroke="#707070" stroke-width="1.1"/>
<line x1="779.40" y1="467" x2="779.40" y2="470.5" stroke="#5a5a5a" stroke-width="1.1"/>
<line x1="817.60" y1="467" x2="817.60" y2="472" stroke="#707070" stroke-width="1.1"/>
<rect x="856.5" y="137.5" width="65" height="18" fill="url(#btn)" stroke="#6a9acc"/>
<rect x="857.5" y="138.5" width="63" height="16" fill="none" stroke="#d8ecfc"/>
<text x="879.20" y="150.80" font-size="11.5" fill="#111" color="#111" textLength="19.40" lengthAdjust="spacingAndGlyphs" >Start</text>
<rect x="848" y="165" width="92" height="1" fill="#a8a8a8" />
<circle cx="858.5" cy="175.8" r="5.6" fill="#fff" stroke="#404040"/>
<circle cx="858.5" cy="190.2" r="5.6" fill="#fff" stroke="#404040"/><circle cx="858.5" cy="190.2" r="3" fill="#111"/>
<text x="867.10" y="179.70" font-size="11.5" fill="#111" color="#111" textLength="23.70" lengthAdjust="spacingAndGlyphs" >Read</text>
<text x="867.10" y="194.00" font-size="11.5" fill="#111" color="#111" textLength="22.20" lengthAdjust="spacingAndGlyphs" >Write</text>
<rect x="848" y="200" width="92" height="1" fill="#a8a8a8" />
<rect x="853.5" y="207.5" width="11" height="11" fill="#fff" stroke="#7a7a7a"/>
<text x="867.10" y="217.20" font-size="11.5" fill="#111" color="#111" textLength="51.40" lengthAdjust="spacingAndGlyphs" >Short stroke</text>
<rect x="853.5" y="225.5" width="55" height="17" fill="#fff" stroke="#c8c8c8"/>
<rect x="893.5" y="225.5" width="15" height="17" fill="#f0f0f0" stroke="#c8c8c8"/>
<path d="M898 231.6 L900.6 228.6 L903.2 231.6 Z M898 235.6 L900.6 238.6 L903.2 235.6 Z" fill="#606060"/><rect x="894" y="233" width="14" height="1" fill="#dcdcdc"/>
<text x="855.20" y="238.00" font-size="11.5" fill="#a0a0a0" color="#a0a0a0" textLength="10.70" lengthAdjust="spacingAndGlyphs" >40</text>
<text x="917.40" y="238.00" font-size="11.5" fill="#111" color="#111" textLength="13.40" lengthAdjust="spacingAndGlyphs" >gB</text>
<rect x="853.5" y="251.5" width="11" height="11" fill="#fff" stroke="#7a7a7a"/>
<path d="M855.6 256.4 l2.4 3 l4.4 -5.8" fill="none" stroke="#111" stroke-width="2"/>
<text x="867.10" y="261.00" font-size="11.5" fill="#111" color="#111" textLength="54.20" lengthAdjust="spacingAndGlyphs" >Transfer rate</text>
<rect x="848" y="265" width="92" height="1" fill="#a8a8a8" />
<text x="852.80" y="277.10" font-size="11.5" fill="#111" color="#111" textLength="36.80" lengthAdjust="spacingAndGlyphs" >Minimum</text>
<rect x="853.5" y="281.5" width="82.5" height="12.2" fill="#000" />
<text x="867.50" y="291.80" font-size="11" fill="#38a4ea" color="#38a4ea" font-weight="700" style="stroke-width:0" textLength="54.40" lengthAdjust="spacingAndGlyphs" >91.9 MB/s</text>
<text x="852.80" y="306.90" font-size="11.5" fill="#111" color="#111" textLength="39.20" lengthAdjust="spacingAndGlyphs" >Maximum</text>
<rect x="853.5" y="310.5" width="82.5" height="12.5" fill="#000" />
<text x="864.40" y="320.90" font-size="11" fill="#38a4ea" color="#38a4ea" font-weight="700" style="stroke-width:0" textLength="60.00" lengthAdjust="spacingAndGlyphs" >339.7 MB/s</text>
<text x="852.80" y="334.20" font-size="11.5" fill="#111" color="#111" textLength="35.80" lengthAdjust="spacingAndGlyphs" >Average</text>
<rect x="853.5" y="338.2" width="82.5" height="12.8" fill="#000" />
<text x="864.40" y="348.90" font-size="11" fill="#38a4ea" color="#38a4ea" font-weight="700" style="stroke-width:0" textLength="60.00" lengthAdjust="spacingAndGlyphs" >111.5 MB/s</text>
<rect x="848" y="359" width="92" height="1" fill="#a8a8a8" />
<rect x="853.5" y="364" width="11" height="11" fill="#fff" stroke="#7a7a7a"/>
<path d="M855.6 369.2 l2.4 3 l4.4 -5.8" fill="none" stroke="#111" stroke-width="2"/>
<text x="866.60" y="373.90" font-size="11.5" fill="#111" color="#111" textLength="52.00" lengthAdjust="spacingAndGlyphs" >Access time</text>
<rect x="853.5" y="378" width="82.5" height="12.7" fill="#000" />
<text x="871.60" y="388.70" font-size="11" fill="#e8e838" color="#e8e838" font-weight="700" style="stroke-width:0" textLength="46.70" lengthAdjust="spacingAndGlyphs" >0.035 ms</text>
<rect x="853.5" y="394.5" width="11" height="11" fill="#fff" stroke="#7a7a7a"/>
<path d="M855.6 399.4 l2.4 3 l4.4 -5.8" fill="none" stroke="#111" stroke-width="2"/>
<text x="867.20" y="403.90" font-size="11.5" fill="#111" color="#111" textLength="39.90" lengthAdjust="spacingAndGlyphs" >Burst rate</text>
<rect x="853.5" y="408.4" width="82.5" height="12.8" fill="#000" />
<text x="865.80" y="418.60" font-size="11" fill="#f4f4f4" color="#f4f4f4" font-weight="700" style="stroke-width:0" textLength="58.60" lengthAdjust="spacingAndGlyphs" >119.0 MB/s</text>
<text x="852.70" y="433.00" font-size="11.5" fill="#111" color="#111" textLength="48.10" lengthAdjust="spacingAndGlyphs" >CPU usage</text>
<rect x="853.5" y="438.2" width="82.5" height="12.6" fill="#000" />
<text x="883.60" y="448.80" font-size="11" fill="#f4f4f4" color="#f4f4f4" font-weight="700" style="stroke-width:0" textLength="24.00" lengthAdjust="spacingAndGlyphs" >1.5%</text>
</svg></body></html>
